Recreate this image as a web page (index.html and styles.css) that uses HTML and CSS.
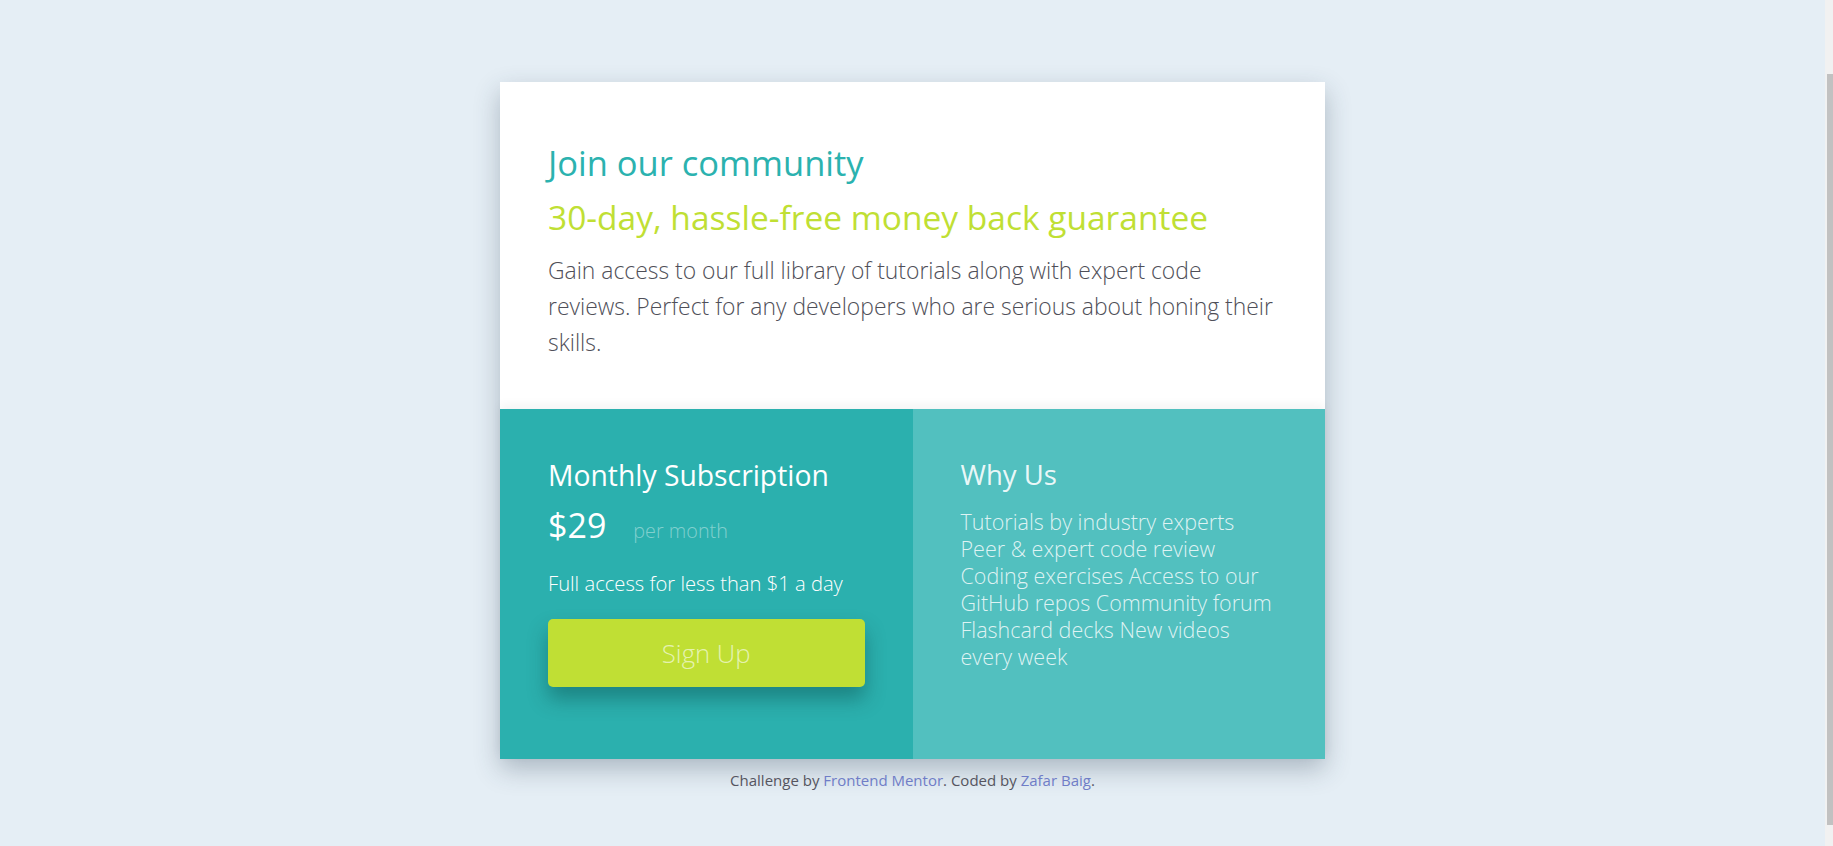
FILE: index.html
```html
<!DOCTYPE html>
<html lang="en">
<head>
<meta charset="utf-8">
<title>Single Price Grid Component</title>
<link rel="stylesheet" href="styles.css">
</head>
<body>
<main class="page">
  <article class="card">
    <section class="intro">
      <h1 class="intro-title">Join our community</h1>
      <h2 class="intro-sub">30-day, hassle-free money back guarantee</h2>
      <p class="intro-text">Gain access to our full library of tutorials along with expert code reviews. Perfect for any developers who are serious about honing their skills.</p>
    </section>
    <div class="plans">
      <section class="plan plan-sub">
        <h3 class="col-title">Monthly Subscription</h3>
        <div class="price"><span class="price-amount">$29</span><span class="price-period">per month</span></div>
        <p class="sub-note">Full access for less than $1 a day</p>
        <button class="signup" type="button">Sign Up</button>
      </section>
      <section class="plan plan-why">
        <h3 class="col-title col-title-light">Why Us</h3>
        <p class="why-list">Tutorials by industry experts<br>Peer &amp; expert code review<br>Coding exercises Access to our<br>GitHub repos Community forum<br>Flashcard decks New videos<br>every week</p>
      </section>
    </div>
  </article>
  <p class="attribution">Challenge by <a href="#">Frontend Mentor</a>. Coded by <a href="#">Zafar Baig</a>.</p>
</main>
<div class="scrollbar" aria-hidden="true"><div class="scrollbar-thumb"></div></div>
</body>
</html>
```

FILE: styles.css
```css
* {
  box-sizing: border-box;
}

body {
  margin: 0;
  padding-right: 8px;
  background: #e5eef5;
  font-family: "Open Sans", "Liberation Sans", sans-serif;
  color: #4d4d55;
}

.page {
  display: flex;
  flex-direction: column;
  align-items: center;
  padding: 82px 0 60px;
}

.card {
  width: 825px;
  background: #fff;
  box-shadow: 0 10px 24px rgba(40, 60, 80, 0.3);
}

.intro {
  padding: 60px 40px 48.5px 48px;
}

.intro-title {
  margin: 0;
  font-size: 34.5px;
  line-height: 42px;
  font-weight: 400;
  color: #2bb2af;
}

.intro-sub {
  margin: 13.5px 0 0;
  font-size: 33.5px;
  line-height: 38px;
  font-weight: 400;
  color: #c0df34;
}

.intro-text {
  margin: 17px 0 0;
  font-size: 22.9px;
  line-height: 36px;
  font-weight: 300;
  color: #4f4f58;
}

.plans {
  display: grid;
  grid-template-columns: 1fr 1fr;
  height: 350px;
  box-shadow: 0 -4px 10px rgba(0, 0, 0, 0.05);
}

.plan {
  padding: 49px 48px 0;
  color: #fff;
}

.plan-sub {
  background: #2bb0ae;
}

.plan-why {
  padding-right: 40px;
  background: #52c0bf;
}

.col-title {
  margin: 0;
  font-size: 28.3px;
  line-height: 34px;
  font-weight: 400;
}

.col-title-light {
  font-size: 27.5px;
  color: rgba(255, 255, 255, 0.9);
}

.price {
  display: flex;
  align-items: baseline;
  margin-top: 13px;
}

.price-amount {
  font-size: 34px;
  line-height: 40px;
}

.price-period {
  margin-left: 27px;
  font-size: 19.8px;
  font-weight: 300;
  color: rgba(255, 255, 255, 0.42);
}

.sub-note {
  margin: 25px 0 0;
  font-size: 20.2px;
  line-height: 26px;
  font-weight: 300;
}

.signup {
  display: block;
  width: 100%;
  height: 68px;
  margin-top: 23px;
  border: 0;
  border-radius: 5px;
  background: #c0df34;
  color: rgba(255, 255, 255, 0.62);
  font-family: inherit;
  font-size: 25.7px;
  font-weight: 300;
  box-shadow: 0 12px 20px rgba(0, 50, 50, 0.35);
}

.why-list {
  margin: 16px 0 0;
  font-size: 21.5px;
  line-height: 27px;
  font-weight: 300;
  color: rgba(255, 255, 255, 0.82);
}

.attribution {
  margin: 11px 0 0;
  font-size: 15px;
  line-height: 20px;
  color: #55555f;
}

.attribution a {
  color: #6f7dc7;
  text-decoration: none;
}

.scrollbar {
  position: fixed;
  top: 0;
  right: 0;
  bottom: 0;
  width: 8px;
  background: #f1f1f1;
}

.scrollbar-thumb {
  margin: 74px 0 0 2px;
  height: 751px;
  background: #c1c1c1;
}
```
